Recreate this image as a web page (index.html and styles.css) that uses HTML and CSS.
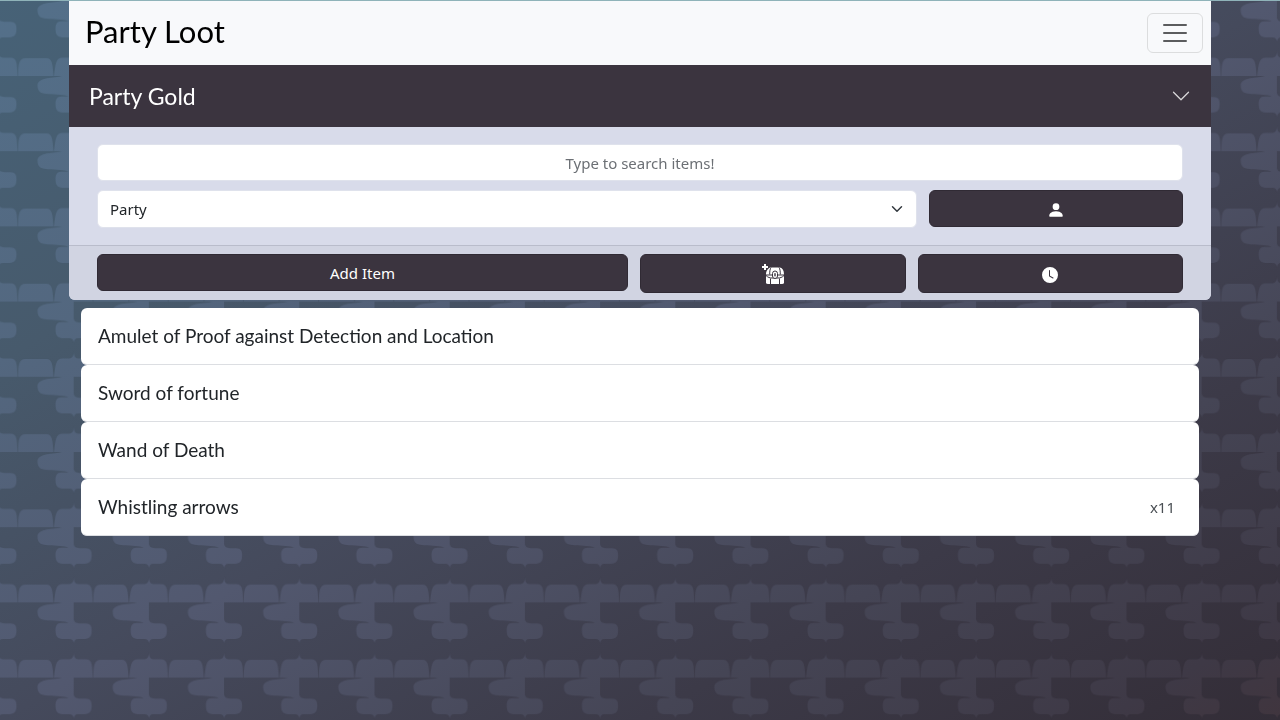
FILE: index.html
```html
<!DOCTYPE html>
<html lang="en">
<head>
<meta charset="utf-8">
<meta name="viewport" content="width=device-width, initial-scale=1">
<title>Party Loot</title>
<link rel="stylesheet" href="styles.css">
</head>
<body>
<svg class="backdrop" aria-hidden="true">
  <defs>
    <linearGradient id="mortar" x1="0" y1="0" x2="1" y2="1">
      <stop offset="0" stop-color="#476277"/>
      <stop offset="0.25" stop-color="#475a6c"/>
      <stop offset="0.5" stop-color="#454a5c"/>
      <stop offset="0.75" stop-color="#3c3a48"/>
      <stop offset="1" stop-color="#332d37"/>
    </linearGradient>
    <linearGradient id="stone" x1="0" y1="0" x2="1" y2="1">
      <stop offset="0" stop-color="#54708a"/>
      <stop offset="0.25" stop-color="#53677f"/>
      <stop offset="0.5" stop-color="#52586f"/>
      <stop offset="0.75" stop-color="#454555"/>
      <stop offset="0.93" stop-color="#3e3946"/>
      <stop offset="1" stop-color="#40353e"/>
    </linearGradient>
    <pattern id="bricks" width="75.2" height="75.2" patternUnits="userSpaceOnUse" patternTransform="translate(-1.5 0.8)">
      <g fill="#fff">
        <path d="M75.500 0H64C56 2 39 1 39 9.500C39 17 44 18 50 18C58 18.500 66 18.500 70 20.500H63C58 20.500 57 24 57 28C57 34 59 36.500 64 36.500H71C74 36.500 74.500 38 75.500 41Z"/>
        <path d="M0 17C1 20 2 20.500 6 21H12C17 21 18 24 18 28C18 34 16 36.500 11 36.500H4C1.500 36.500 .7 38 0 41Z"/>
        <path d="M0 50C.5 56 2 57 6 57H12C19 57 18.500 64 19 75.200H0Z"/>
        <path d="M75.500 50C75 56 73 57 69 57H64C57 57 57 64 55.500 75.200H75.500Z"/>
        <path d="M19.500 75.200C20 64 20 57.500 27 57.500H48C54 57.500 54 64 55 75.200Z"/>
      </g>
    </pattern>
    <mask id="wall"><rect width="100%" height="100%" fill="url(#bricks)"/></mask>
  </defs>
  <rect width="100%" height="100%" fill="url(#mortar)"/>
  <rect width="100%" height="100%" fill="url(#stone)" mask="url(#wall)"/>
</svg>

<div class="page">
  <header class="navbar">
    <a class="brand" href="#">Party Loot</a>
    <button class="toggler" type="button" aria-label="Toggle navigation">
      <svg width="30" height="30" viewBox="0 0 30 30" aria-hidden="true"><path d="M4 7h22M4 15h22M4 23h22" fill="none" stroke="#5b5c5e" stroke-width="2" stroke-linecap="round"/></svg>
    </button>
  </header>

  <main>
    <section class="panel">
      <button class="gold" type="button" aria-expanded="false">
        <span>Party Gold</span>
        <svg width="20" height="20" viewBox="0 0 16 16" aria-hidden="true"><path d="M2 5l6 6 6-6" fill="none" stroke="#d9d8da" stroke-width="1" stroke-linecap="round" stroke-linejoin="round"/></svg>
      </button>
      <form class="filters">
        <input class="field search" type="text" placeholder="Type to search items!" aria-label="Search items">
        <div class="owner-row">
          <select class="field owner" aria-label="Owner"><option>Party</option></select>
          <button class="btn person" type="button" aria-label="Characters">
            <svg width="18" height="18" viewBox="0 0 16 16" fill="#fff" aria-hidden="true"><path d="M3 14s-1 0-1-1 1-4 6-4 6 3 6 4-1 1-1 1zm5-6a3 3 0 1 0 0-6 3 3 0 0 0 0 6"/></svg>
          </button>
        </div>
      </form>
      <div class="actions">
        <button class="btn add" type="button">Add Item</button>
        <button class="btn tall" type="button" aria-label="Add loot chest">
          <svg width="24" height="24" viewBox="0 0 24 24" aria-hidden="true">
            <path d="M4 1v6M1 4h6" stroke="#fff" stroke-width="2" fill="none"/>
            <path fill="#fff" d="M9 4.500H19C21.500 5 23 7.500 23 11.500H5C5 9 5.500 7.500 7 6Z"/>
            <path fill="#fff" d="M5 12.500H23V19.500Q23 21 21 21H7Q5 21 5 19.500Z"/>
            <path d="M10 4.500C9 6 8.700 8 8.700 11.500M18 4.500C19 6 19.300 8 19.300 11.500M9.500 15.500V21M18.500 15.500V21M5 12.500C7 14.500 9 15 11 15H17C19 15 21 14.500 23 12.500" fill="none" stroke="#3b343f" stroke-width="1"/>
            <rect x="11.500" y="8" width="5" height="7.500" rx="2.500" fill="#fff" stroke="#3b343f"/>
            <rect x="13.300" y="10" width="1.400" height="3.500" rx=".7" fill="#3b343f"/>
          </svg>
        </button>
        <button class="btn tall" type="button" aria-label="History">
          <svg width="16" height="16" viewBox="0 0 16 16" fill="#fff" aria-hidden="true"><path d="M16 8A8 8 0 1 1 0 8a8 8 0 0 1 16 0M8 3.500a.5.500 0 0 0-1 0V9a.5.500 0 0 0 .252.434l3.500 2a.5.500 0 0 0 .496-.868L8 8.710z"/></svg>
        </button>
      </div>
    </section>

    <ul class="items">
      <li><button class="item" type="button"><span class="name">Amulet of Proof against Detection and Location</span></button></li>
      <li><button class="item" type="button"><span class="name">Sword of fortune</span></button></li>
      <li><button class="item" type="button"><span class="name">Wand of Death</span></button></li>
      <li><button class="item" type="button"><span class="name">Whistling arrows</span><span class="count">x11</span></button></li>
    </ul>
  </main>
</div>
</body>
</html>
```
FILE: styles.css
```css
* { box-sizing: border-box; }
body {
  margin: 0;
  min-height: 100vh;
  border-top: 1px solid #8fb3b9;
  background: #454a5c;
  color: #212529;
  font-family: "Noto Sans", sans-serif;
  font-size: 15px;
  line-height: 24px;
}
button, input, select { font: inherit; color: inherit; }
button { cursor: pointer; }
svg { display: block; }
.backdrop {
  position: fixed;
  inset: 0;
  z-index: -1;
  width: 100%;
  height: 100%;
}
.page { max-width: 1142px; margin: 0 auto; }
.navbar {
  display: flex;
  align-items: center;
  justify-content: space-between;
  height: 64px;
  padding: 0 8px 0 16px;
  background: #f8f9fb;
}
.brand {
  padding-bottom: 4px;
  color: #000;
  font-family: Lato, sans-serif;
  font-size: 31px;
  line-height: 40px;
  text-decoration: none;
}
.toggler {
  padding: 4px 12px;
  border: 1px solid #dcddde;
  border-radius: 6px;
  background: transparent;
}
.panel {
  overflow: hidden;
  border-radius: 0 0 6px 6px;
  background: #d8dbea;
}
.gold {
  display: flex;
  align-items: center;
  justify-content: space-between;
  width: 100%;
  height: 62px;
  padding: 0 20px;
  border: 0;
  background: #3b343f;
  color: #fff;
  font-family: Lato, sans-serif;
  font-size: 23px;
}
.filters {
  display: grid;
  gap: 9px;
  padding: 17px 28px;
}
.field {
  width: 100%;
  height: 37px;
  padding: 0 12px;
  border: 1px solid #dfe2ec;
  border-radius: 6px;
  background: #fff;
}
.search { text-align: center; }
.search::placeholder { color: #6c7075; opacity: 1; }
.owner-row {
  display: grid;
  grid-template-columns: 820fr 254fr;
  gap: 12px;
}
.owner {
  height: 38px;
  appearance: none;
  background: #fff url("data:image/svg+xml,%3Csvg xmlns='http://www.w3.org/2000/svg' viewBox='0 0 16 16'%3E%3Cpath fill='none' stroke='%23343a40' stroke-linecap='round' stroke-linejoin='round' stroke-width='2' d='m2 5 6 6 6-6'/%3E%3C/svg%3E") no-repeat right 13px center / 12px 12px;
}
.btn {
  display: flex;
  align-items: center;
  justify-content: center;
  height: 37px;
  padding: 0;
  border: 1px solid #302a34;
  border-radius: 6px;
  background: #3b343f;
  color: #fff;
}
.person { padding-top: 2px; }
.actions {
  display: grid;
  grid-template-columns: 532fr 266fr 266fr;
  gap: 12px;
  padding: 8px 28px 7px;
  border-top: 1px solid #b9bccb;
  background: #d1d4e2;
}
.tall { height: 39px; padding-top: 2px; }
.items {
  display: grid;
  margin: 8px 12px;
  padding: 0;
  list-style: none;
}
.item {
  display: flex;
  align-items: center;
  justify-content: space-between;
  width: 100%;
  height: 57px;
  padding: 0 24px 0 17px;
  border: 0;
  border-bottom: 1px solid #dcdee2;
  border-radius: 6px;
  background: #fff;
  text-align: left;
}
.name { font-family: Lato, sans-serif; font-size: 19px; }
.count { color: #4a4f54; }
```
